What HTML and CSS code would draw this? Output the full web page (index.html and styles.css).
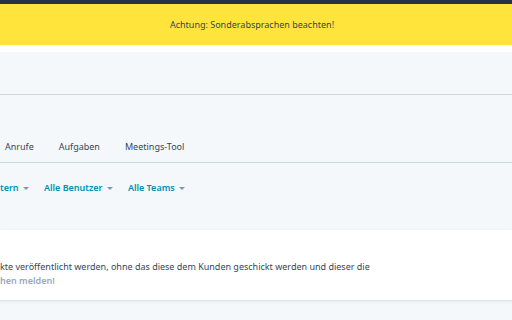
FILE: index.html
```html
<!DOCTYPE html>
<html lang="de">
<head>
    <meta charset="UTF-8">
    <title>Einstellungen</title>
    <link rel="stylesheet" href="styles.css">
</head>
<body>

<div class="topbar"></div>
<div class="banner">Achtung: Sonderabsprachen beachten!</div>
<div class="gap"></div>

<div class="header"></div>

<div class="tabs">
    <span class="tab">Anrufe</span>
    <span class="tab">Aufgaben</span>
    <span class="tab">Meetings-Tool</span>
</div>

<div class="filters">
    <span class="filter">tern <span class="caret"></span></span>
    <span class="filter">Alle Benutzer <span class="caret"></span></span>
    <span class="filter">Alle Teams <span class="caret"></span></span>
</div>

<div class="card">
    <p>kte veröffentlicht werden, ohne das diese dem Kunden geschickt werden und dieser die</p>
    <p class="muted">hen melden!</p>
</div>

<div class="footer"></div>

</body>
</html>
```

FILE: styles.css
```css
body {
    margin: 0;
    font-family: "Noto Sans", sans-serif;
    font-size: 9px;
    color: #33475b;
    background-color: #f5f8fa;
    overflow: hidden;
}
.topbar {
    height: 4px;
    background-color: #253342;
}
.banner {
    height: 41px;
    background-color: #ffe43b;
    display: flex;
    align-items: center;
    justify-content: center;
    padding-right: 8px;
    color: #33475b;
}
.gap {
    height: 7px;
    background-color: #ffffff;
}
.header {
    height: 42px;
    border-bottom: 1px solid #cbd6e2;
}
.tabs {
    height: 68px;
    box-sizing: border-box;
    display: flex;
    align-items: flex-end;
    gap: 25px;
    padding: 0 0 9px 5px;
    border-bottom: 1px solid #cbd6e2;
}
.filters {
    height: 67px;
    box-sizing: border-box;
    display: flex;
    gap: 15px;
    padding-top: 18px;
}
.filter {
    color: #0091ae;
    font-weight: 600;
}
.caret {
    display: inline-block;
    width: 0;
    height: 0;
    margin-left: 2px;
    vertical-align: middle;
    border-left: 3px solid transparent;
    border-right: 3px solid transparent;
    border-top: 3px solid #7c98b6;
}
.card {
    height: 71px;
    box-sizing: border-box;
    background-color: #ffffff;
    padding-top: 30px;
    border-bottom: 1px solid #dfe3eb;
    box-shadow: 0 1px 3px rgba(45, 62, 80, 0.08);
}
.card p {
    margin: 0;
    line-height: 14px;
}
.muted {
    color: #99a9bb;
    font-weight: 600;
}
.footer {
    height: 20px;
}
```
